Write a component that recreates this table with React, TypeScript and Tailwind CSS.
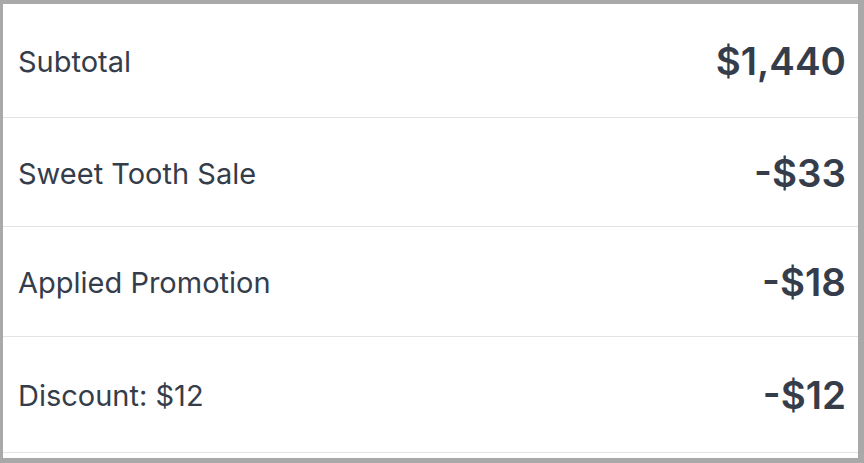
const rows = [
  { label: 'Subtotal', amount: '$1,440', h: 'h-[114px]' },
  { label: 'Sweet Tooth Sale', amount: '-$33', h: 'h-[109px]' },
  { label: 'Applied Promotion', amount: '-$18', h: 'h-[110px]' },
  { label: 'Discount: $12', amount: '-$12', h: 'h-[116px]' },
];

export default function App() {
  return (
    <div className="h-[463px] w-[864px] overflow-hidden bg-[#a9a9a9] pl-[3px] pr-[6px] pt-[4px] font-['Inter',sans-serif]">
      <div className="h-[454px] bg-white">
        {rows.map((row) => (
          <div
            key={row.label}
            className={`flex items-center justify-between border-b border-[#e3e3e6] pl-[15px] pr-[12px] pt-[3px] ${row.h}`}
          >
            <span className="text-[29px] text-[#353d4b]">{row.label}</span>
            <span className="text-[38.5px] font-semibold text-[#353d4b]">{row.amount}</span>
          </div>
        ))}
      </div>
    </div>
  );
}
